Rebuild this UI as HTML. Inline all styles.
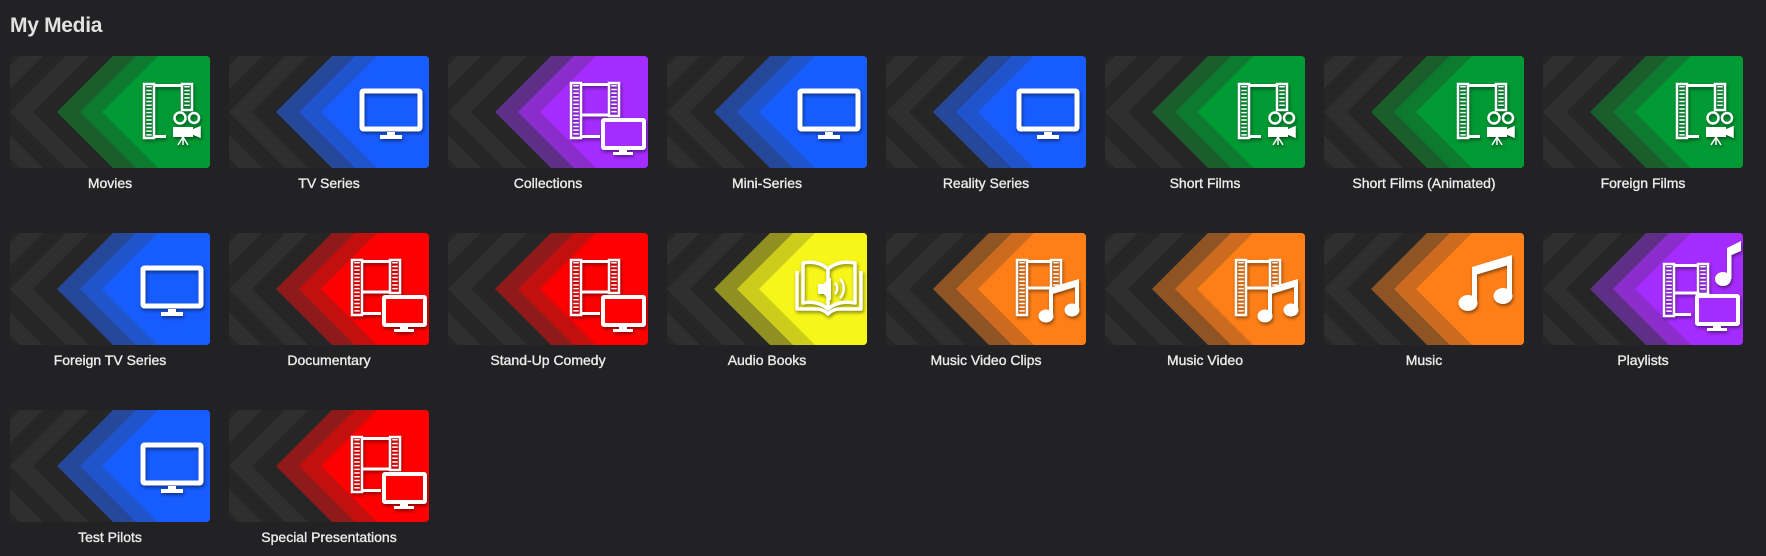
<!DOCTYPE html>
<html><head><meta charset="utf-8"><style>
body{margin:0;width:1766px;height:556px;background:#222124;overflow:hidden;font-family:"Liberation Sans",sans-serif;position:relative}
h1{position:absolute;left:10px;top:14px;margin:0;font-size:21px;font-weight:bold;color:#e2e2e2;letter-spacing:-0.3px}
.c{position:absolute;width:200px}
.c svg{display:block;border-radius:4px;width:200px;height:112px}
.l{text-align:center;color:#ececec;font-size:14px;margin-top:7px;line-height:16px;-webkit-text-stroke:0.35px #ececec}
.ic{filter:drop-shadow(1px 2px 1.5px rgba(0,0,0,.45))}
</style></head><body>
<svg width="0" height="0" style="position:absolute">
<defs>
<g id="grey"><rect width="200" height="112" fill="#262626"/>
<polygon fill="#2f2f2f" points="10,0 33,0 -23,56 33,112 10,112 -46,56"/>
<polygon fill="#2f2f2f" points="56,0 79,0 23,56 79,112 56,112 0,56"/></g>
<polygon id="b1" points="103,0 200,0 200,112 103,112 47,56"/>
<polygon id="b2" points="126,0 200,0 200,112 126,112 70,56"/>
<polygon id="b3" points="148,0 200,0 200,112 148,112 92,56"/>
<g id="tv"><rect x="133" y="35" width="58" height="38" rx="1.5" fill="none" stroke="#fff" stroke-width="5"/><path d="M158 76h8v3h-8zM151 79h22v4h-22z" fill="#fff"/></g>
<g id="movie" fill="none" stroke="#fff"><rect x="134" y="28" width="10" height="54" stroke-width="2.5"/><line x1="139" y1="30" x2="139" y2="80" stroke-width="5.5" stroke-dasharray="1.5 2.2"/><rect x="172" y="28" width="10" height="26" stroke-width="2.5"/><line x1="177" y1="30" x2="177" y2="52" stroke-width="5.5" stroke-dasharray="1.5 2.2"/><path d="M144 29.5h28M144 80.5h12" stroke-width="3"/><circle cx="170" cy="62" r="5.5" stroke-width="2.5"/><circle cx="184" cy="62" r="5" stroke-width="2.5"/><rect x="163" y="71" width="20" height="10" fill="#fff" stroke="none"/><path d="M183 74l7-3v10l-7-3z M173 81l-5 8M173 81v8M173 81l5 8" fill="#fff" stroke-width="1.5"/></g>
<g id="film"><rect x="123" y="27" width="10" height="55" fill="none" stroke="#fff" stroke-width="2.5"/><line x1="128" y1="29" x2="128" y2="80" stroke="#fff" stroke-width="5.5" stroke-dasharray="1.5 2.2"/><rect x="161" y="27" width="10" height="33" fill="none" stroke="#fff" stroke-width="2.5"/><line x1="166" y1="29" x2="166" y2="58" stroke="#fff" stroke-width="5.5" stroke-dasharray="1.5 2.2"/><path d="M133 28.5h28M133 59h28M133 80.5h19" stroke="#fff" stroke-width="3"/></g>
<g id="smtv"><rect x="155" y="64" width="41" height="28" rx="1" stroke="#fff" stroke-width="4"/><path d="M171 94h8v2h-8zM165 96h20v3h-20z" fill="#fff"/></g>
<g id="note" fill="#fff"><ellipse cx="144" cy="70" rx="9.5" ry="8"/><ellipse cx="179" cy="63" rx="9.5" ry="8"/><rect x="148" y="34" width="5" height="36"/><rect x="183" y="24" width="5" height="39"/><polygon points="148,34 188,22 188,31 148,43"/></g>
<g id="mvc"><g transform="translate(8,0)"><rect x="123" y="27" width="10" height="55" fill="none" stroke="#fff" stroke-width="2.5"/><line x1="128" y1="29" x2="128" y2="80" stroke="#fff" stroke-width="5.5" stroke-dasharray="1.5 2.2"/><rect x="157" y="27" width="10" height="30" fill="none" stroke="#fff" stroke-width="2.5"/><line x1="162" y1="29" x2="162" y2="55" stroke="#fff" stroke-width="5.5" stroke-dasharray="1.5 2.2"/><path d="M133 28.5h24M133 55h24" stroke="#fff" stroke-width="3"/></g><g fill="#fff"><ellipse cx="160" cy="83" rx="7.5" ry="6.5"/><ellipse cx="186" cy="77" rx="7.5" ry="6.5"/><rect x="163" y="55" width="4" height="28"/><rect x="189" y="47" width="4" height="30"/><polygon points="163,55 193,46 193,53 163,62"/></g></g>
</defs></svg>
<h1>My Media</h1>

<div class="c" style="left:10px;top:56px"><svg><use href="#grey"/><use href="#b1" fill="#1a5e2c"/><use href="#b2" fill="#0e7a30"/><use href="#b3" fill="#009a34"/><g class="ic"><use href="#movie"/></g></svg><div class="l">Movies</div></div>
<div class="c" style="left:229px;top:56px"><svg><use href="#grey"/><use href="#b1" fill="#25489a"/><use href="#b2" fill="#1f54cc"/><use href="#b3" fill="#175cfe"/><g class="ic"><use href="#tv"/></g></svg><div class="l">TV Series</div></div>
<div class="c" style="left:448px;top:56px"><svg><use href="#grey"/><use href="#b1" fill="#5f2f88"/><use href="#b2" fill="#8a2dcc"/><use href="#b3" fill="#a52cfe"/><g class="ic"><use href="#film"/><use href="#smtv" fill="#a52cfe"/></g></svg><div class="l">Collections</div></div>
<div class="c" style="left:667px;top:56px"><svg><use href="#grey"/><use href="#b1" fill="#25489a"/><use href="#b2" fill="#1f54cc"/><use href="#b3" fill="#175cfe"/><g class="ic"><use href="#tv"/></g></svg><div class="l">Mini-Series</div></div>
<div class="c" style="left:886px;top:56px"><svg><use href="#grey"/><use href="#b1" fill="#25489a"/><use href="#b2" fill="#1f54cc"/><use href="#b3" fill="#175cfe"/><g class="ic"><use href="#tv"/></g></svg><div class="l">Reality Series</div></div>
<div class="c" style="left:1105px;top:56px"><svg><use href="#grey"/><use href="#b1" fill="#1a5e2c"/><use href="#b2" fill="#0e7a30"/><use href="#b3" fill="#009a34"/><g class="ic"><use href="#movie"/></g></svg><div class="l">Short Films</div></div>
<div class="c" style="left:1324px;top:56px"><svg><use href="#grey"/><use href="#b1" fill="#1a5e2c"/><use href="#b2" fill="#0e7a30"/><use href="#b3" fill="#009a34"/><g class="ic"><use href="#movie"/></g></svg><div class="l">Short Films (Animated)</div></div>
<div class="c" style="left:1543px;top:56px"><svg><use href="#grey"/><use href="#b1" fill="#1a5e2c"/><use href="#b2" fill="#0e7a30"/><use href="#b3" fill="#009a34"/><g class="ic"><use href="#movie"/></g></svg><div class="l">Foreign Films</div></div>

<div class="c" style="left:10px;top:233px"><svg><use href="#grey"/><use href="#b1" fill="#25489a"/><use href="#b2" fill="#1f54cc"/><use href="#b3" fill="#175cfe"/><g class="ic"><use href="#tv"/></g></svg><div class="l">Foreign TV Series</div></div>
<div class="c" style="left:229px;top:233px"><svg><use href="#grey"/><use href="#b1" fill="#8f1a1a"/><use href="#b2" fill="#c40f0f"/><use href="#b3" fill="#fe0000"/><g class="ic"><use href="#film"/><use href="#smtv" fill="#fe0000"/></g></svg><div class="l">Documentary</div></div>
<div class="c" style="left:448px;top:233px"><svg><use href="#grey"/><use href="#b1" fill="#8f1a1a"/><use href="#b2" fill="#c40f0f"/><use href="#b3" fill="#fe0000"/><g class="ic"><use href="#film"/><use href="#smtv" fill="#fe0000"/></g></svg><div class="l">Stand-Up Comedy</div></div>
<div class="c" style="left:667px;top:233px"><svg><use href="#grey"/><use href="#b1" fill="#8f8f22"/><use href="#b2" fill="#cccc1c"/><use href="#b3" fill="#f6f619"/><g class="ic" fill="none" stroke="#fff" stroke-width="3.5" stroke-linejoin="round"><path d="M130 38v38h20c4 0 8 2 11 5c3-3 7-5 11-5h22V38"/><path d="M136 30v40c10-2 18 0 25 6c7-6 15-8 27-6V30c-12-2-20 0-27 6c-7-6-15-8-25-6z"/><path d="M161 36v40"/><path d="M152 52h5l6-6v20l-6-6h-5z" fill="#fff" stroke-width="2"/><path d="M168 50c3 3 3 8 0 11M173 46c5 5 5 14 0 19" stroke-width="2.5"/></g></svg><div class="l">Audio Books</div></div>
<div class="c" style="left:886px;top:233px"><svg><use href="#grey"/><use href="#b1" fill="#8f5424"/><use href="#b2" fill="#cc6a1f"/><use href="#b3" fill="#fe7f18"/><g class="ic"><use href="#mvc"/></g></svg><div class="l">Music Video Clips</div></div>
<div class="c" style="left:1105px;top:233px"><svg><use href="#grey"/><use href="#b1" fill="#8f5424"/><use href="#b2" fill="#cc6a1f"/><use href="#b3" fill="#fe7f18"/><g class="ic"><use href="#mvc"/></g></svg><div class="l">Music Video</div></div>
<div class="c" style="left:1324px;top:233px"><svg><use href="#grey"/><use href="#b1" fill="#8f5424"/><use href="#b2" fill="#cc6a1f"/><use href="#b3" fill="#fe7f18"/><g class="ic"><use href="#note"/></g></svg><div class="l">Music</div></div>
<div class="c" style="left:1543px;top:233px"><svg><use href="#grey"/><use href="#b1" fill="#5f2f88"/><use href="#b2" fill="#8a2dcc"/><use href="#b3" fill="#a52cfe"/><g class="ic"><g transform="translate(-2,4)"><rect x="123" y="27" width="10" height="52" fill="none" stroke="#fff" stroke-width="2.5"/><line x1="128" y1="29" x2="128" y2="77" stroke="#fff" stroke-width="5.5" stroke-dasharray="1.5 2.2"/><rect x="157" y="27" width="10" height="30" fill="none" stroke="#fff" stroke-width="2.5"/><line x1="162" y1="29" x2="162" y2="55" stroke="#fff" stroke-width="5.5" stroke-dasharray="1.5 2.2"/><path d="M133 28.5h24M133 56h24M133 77.5h17" stroke="#fff" stroke-width="3"/></g><rect x="154" y="63" width="41" height="28" rx="1" fill="#a52cfe" stroke="#fff" stroke-width="4"/><path d="M170 93h8v2h-8zM164 95h20v3h-20z" fill="#fff"/><g fill="#fff"><ellipse cx="180" cy="46" rx="8" ry="7"/><rect x="184" y="15" width="4.5" height="31"/><polygon points="184,15 198,8 198,18 184,24"/></g></g></svg><div class="l">Playlists</div></div>

<div class="c" style="left:10px;top:410px"><svg><use href="#grey"/><use href="#b1" fill="#25489a"/><use href="#b2" fill="#1f54cc"/><use href="#b3" fill="#175cfe"/><g class="ic"><use href="#tv"/></g></svg><div class="l">Test Pilots</div></div>
<div class="c" style="left:229px;top:410px"><svg><use href="#grey"/><use href="#b1" fill="#8f1a1a"/><use href="#b2" fill="#c40f0f"/><use href="#b3" fill="#fe0000"/><g class="ic"><use href="#film"/><use href="#smtv" fill="#fe0000"/></g></svg><div class="l">Special Presentations</div></div>
</body></html>
